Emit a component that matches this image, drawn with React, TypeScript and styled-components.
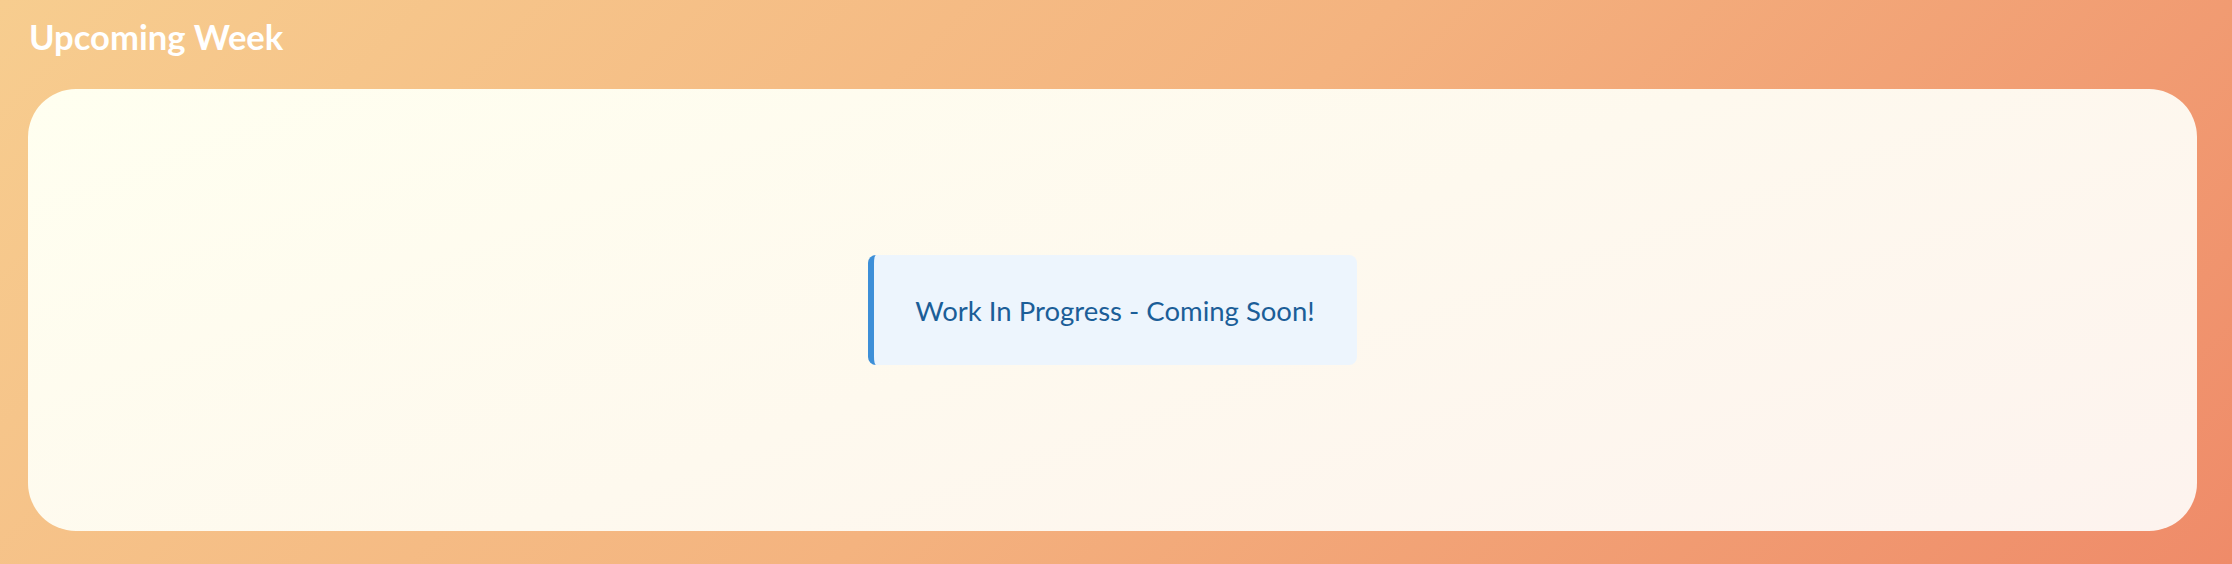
import React from "react";
import styled, { createGlobalStyle } from "styled-components";

const GlobalStyle = createGlobalStyle`
  html, body {
    margin: 0;
    padding: 0;
    height: 100%;
  }
  body {
    font-family: Lato, "Open Sans", "Liberation Sans", sans-serif;
  }
  #root {
    height: 100%;
  }
`;

const Page = styled.div`
  box-sizing: border-box;
  width: 100%;
  height: 564px;
  padding: 15px 35px 33px 28px;
  display: flex;
  flex-direction: column;
  background: linear-gradient(135deg, #f7cd8f 0%, #f4b37f 50%, #ef8b69 100%);
`;

const Title = styled.h1`
  margin: 0 0 30px 1px;
  font-family: Lato, "Liberation Sans", sans-serif;
  font-weight: 700;
  font-size: 34.6px;
  line-height: 44px;
  color: #ffffff;
`;

const Card = styled.div`
  flex: 1;
  border-radius: 48px;
  background: linear-gradient(160deg, #fffff0 0%, #fef9ee 50%, #fdf3ee 100%);
  display: flex;
  align-items: center;
  justify-content: center;
`;

const Notice = styled.div`
  box-sizing: border-box;
  height: 110px;
  display: flex;
  align-items: center;
  padding: 0 42px 0 41px;
  background: #edf5fd;
  border-left: 6px solid #3d8fd8;
  border-radius: 8px;
  color: #1b5e98;
  font-family: Lato, "Liberation Sans", sans-serif;
  font-size: 27.5px;
  line-height: 1.2;
`;

export default function App() {
  return (
    <>
      <GlobalStyle />
      <Page>
        <Title>Upcoming Week</Title>
        <Card>
          <Notice>Work In Progress - Coming Soon!</Notice>
        </Card>
      </Page>
    </>
  );
}
